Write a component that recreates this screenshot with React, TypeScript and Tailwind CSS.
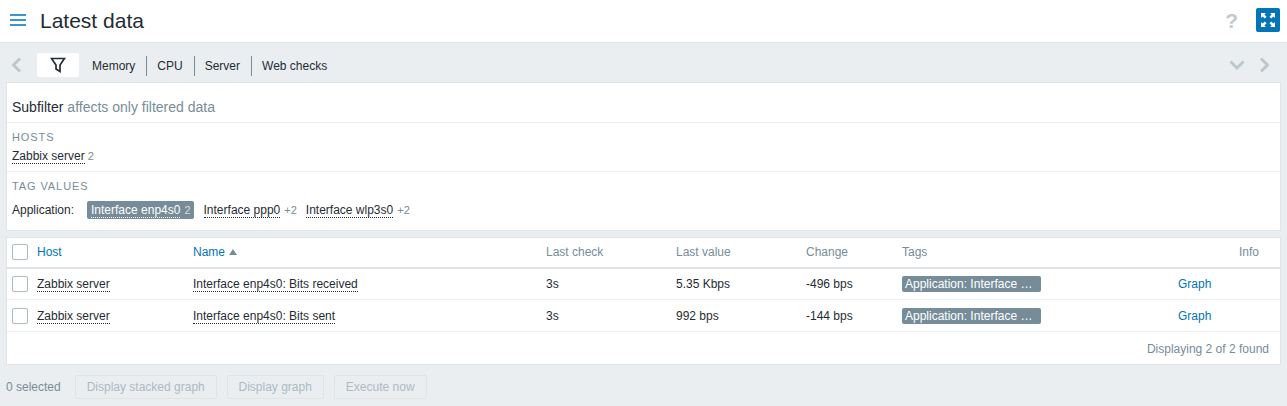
const FONT = "font-['Liberation_Sans',Arial,sans-serif]";

function Dotted({ children }: { children: React.ReactNode }) {
  return <span className="border-b border-dotted border-[#1f2c33]">{children}</span>;
}

function Checkbox() {
  return <span className="block h-4 w-4 rounded-[2px] border border-[#acbbc2] bg-white" />;
}

function Chevron({ d, className }: { d: string; className: string }) {
  return (
    <svg viewBox="0 0 16 16" className={className} fill="none" stroke="#bcc7cd" strokeWidth="2.8">
      <path d={d} />
    </svg>
  );
}

function TagValue({ name, count, className }: { name: string; count: string; className: string }) {
  return (
    <span className={className}>
      <Dotted>{name}</Dotted>
      <span className="ml-1 text-[11px] text-[#768d99]">{count}</span>
    </span>
  );
}

const rows = [
  { name: "Interface enp4s0: Bits received", value: "5.35 Kbps", change: "-496 bps", h: "h-[31px]" },
  { name: "Interface enp4s0: Bits sent", value: "992 bps", change: "-144 bps", h: "h-[32px] [&>td]:pt-px" },
];

export default function App() {
  return (
    <div className={`${FONT} h-[406px] w-[1287px] overflow-hidden bg-[#ebeef0] text-xs text-[#1f2c33]`}>
      {/* page header */}
      <header className="flex h-[43px] items-center border-b border-[#dfe4e7] bg-white pb-[2px] pl-[10px] pr-[7px]">
        <svg viewBox="0 0 16 12" className="h-3 w-4" fill="#3e95cc">
          <rect y="0" width="16" height="2" />
          <rect y="5" width="16" height="2" />
          <rect y="10" width="16" height="2" />
        </svg>
        <h1 className="ml-[14px] text-[21px] leading-none">Latest data</h1>
        <span className="ml-auto mr-[18px] text-[21px] font-bold leading-none text-[#c0cad0]">?</span>
        <span className="flex h-6 w-6 items-center justify-center rounded-[2px] bg-[#0275b8]">
          <svg viewBox="0 0 16 16" className="h-4 w-4" fill="#fff">
            <path d="M1 1h5L4.400 2.600 6.600 4.800 4.800 6.600 2.600 4.400 1 6z" />
            <path d="M15 1h-5l1.600 1.600-2.200 2.200 1.800 1.800 2.200-2.200L15 6z" />
            <path d="M1 15h5l-1.600-1.600 2.200-2.200-1.800-1.800-2.200 2.200L1 10z" />
            <path d="M15 15h-5l1.600-1.600-2.200-2.200 1.800-1.800 2.200 2.200L15 10z" />
          </svg>
        </span>
      </header>

      {/* filter tabs */}
      <div className="flex h-[39px] items-center pl-[9px] pr-[15px] pt-[5px]">
        <Chevron d="M11 1.500 4.500 8l6.500 6.500" className="h-4 w-4" />
        <span className="ml-3 flex h-6 w-[42px] items-center justify-center rounded-[2px] bg-white">
          <svg viewBox="0 0 16 16" className="h-4 w-4" fill="none" stroke="#1f2c33" strokeWidth="1.700" strokeLinejoin="miter">
            <path d="M1.500 1.500h13L10 8v6.500l-4-2.500V8z" />
          </svg>
        </span>
        <div className="ml-[3px] mt-px flex items-center">
          {["Memory", "CPU", "Server", "Web checks"].map((t, i) => (
            <span key={t} className={`flex h-5 items-center pl-[10px] pr-[11px] pt-px ${i < 3 ? "border-r border-[#768d99]" : ""}`}>
              {t}
            </span>
          ))}
        </div>
        <Chevron d="M1.500 4.500 8 11l6.500-6.500" className="ml-auto h-4 w-4" />
        <Chevron d="M5 1.500 11.500 8 5 14.500" className="ml-[11px] h-4 w-4" />
      </div>

      {/* subfilter */}
      <section className="mx-[6px] h-[149px] border border-[#dfe4e7] bg-white">
        <div className="flex h-[40px] items-end border-b border-[#ebeef0] px-[5px] pb-[7px] text-sm leading-4">
          Subfilter<span className="ml-1 text-[#768d99]">affects only filtered data</span>
        </div>
        <div className="h-[49px] border-b border-[#ebeef0] px-[5px] pt-2">
          <div className="text-[11px] leading-[13px] tracking-[0.9px] text-[#768d99]">HOSTS</div>
          <div className="mt-[5px] leading-[15px]">
            <Dotted>Zabbix server</Dotted>
            <span className="ml-[3px] text-[11px] text-[#768d99]">2</span>
          </div>
        </div>
        <div className="px-[5px] pt-2">
          <div className="text-[11px] leading-[13px] tracking-[0.9px] text-[#768d99]">TAG VALUES</div>
          <div className="mt-2 flex h-[18px] items-center">
            <span className="w-[75px]">Application:</span>
            <span className="flex h-[18px] items-center rounded-[2px] bg-[#768d99] pl-1 pr-[3px] text-white">
              <span className="border-b border-dotted border-white leading-[14px]">Interface enp4s0</span>
              <span className="ml-1 text-[11px] text-[#d5dde1]">2</span>
            </span>
            <TagValue name="Interface ppp0" count="+2" className="ml-[10px]" />
            <TagValue name="Interface wlp3s0" count="+2" className="ml-[9px]" />
          </div>
        </div>
      </section>

      {/* data table */}
      <section className="mx-[6px] mt-[6px] h-[128px] border border-[#dfe4e7] bg-white">
        <table className="w-full table-fixed border-collapse">
          <colgroup>
            <col className="w-[30px]" />
            <col className="w-[156px]" />
            <col className="w-[353px]" />
            <col className="w-[130px]" />
            <col className="w-[130px]" />
            <col className="w-[96px]" />
            <col className="w-[276px]" />
            <col className="w-[61px]" />
            <col />
          </colgroup>
          <thead>
            <tr className="h-[30px] border-b-2 border-[#dfe4e7] text-left text-[#768d99]">
              <th className="pb-[2px] pl-[5px] font-normal"><Checkbox /></th>
              <th className="pb-[2px] font-normal text-[#0275b8]">Host</th>
              <th className="pb-[2px] font-normal text-[#0275b8]">
                Name
                <span className="mb-px ml-1 inline-block border-x-[4px] border-b-[6px] border-x-transparent border-b-[#768d99]" />
              </th>
              <th className="pb-[2px] font-normal">Last check</th>
              <th className="pb-[2px] font-normal">Last value</th>
              <th className="pb-[2px] font-normal">Change</th>
              <th className="pb-[2px] font-normal">Tags</th>
              <th />
              <th className="pb-[2px] font-normal">Info</th>
            </tr>
          </thead>
          <tbody>
            {rows.map((r) => (
              <tr key={r.name} className={`${r.h} border-b border-[#ebeef0]`}>
                <td className="pl-[5px]"><Checkbox /></td>
                <td><Dotted>Zabbix server</Dotted></td>
                <td><Dotted>{r.name}</Dotted></td>
                <td>3s</td>
                <td>{r.value}</td>
                <td>{r.change}</td>
                <td>
                  <span className="block h-4 w-[139px] rounded-[2px] bg-[#768d99] px-[3px] leading-4 text-white">
                    Application: Interface …
                  </span>
                </td>
                <td className="text-[#0275b8]">Graph</td>
                <td />
              </tr>
            ))}
          </tbody>
        </table>
        <div className="mt-[10px] pr-[11px] text-right leading-[14px] text-[#768d99]">Displaying 2 of 2 found</div>
      </section>

      {/* action buttons */}
      <div className="ml-[6px] mt-[10px] flex items-center">
        <span className="text-[#768d99]">0 selected</span>
        {[
          { t: "Display stacked graph", w: "ml-[14px] w-[142px]" },
          { t: "Display graph", w: "ml-[10px] w-[97px]" },
          { t: "Execute now", w: "ml-[10px] w-[93px]" },
        ].map((b) => (
          <span
            key={b.t}
            className={`${b.w} flex h-6 items-center justify-center rounded-[2px] border border-[#dfe4e7] bg-[#ebeef0] text-[#acbbc2]`}
          >
            {b.t}
          </span>
        ))}
      </div>
    </div>
  );
}
